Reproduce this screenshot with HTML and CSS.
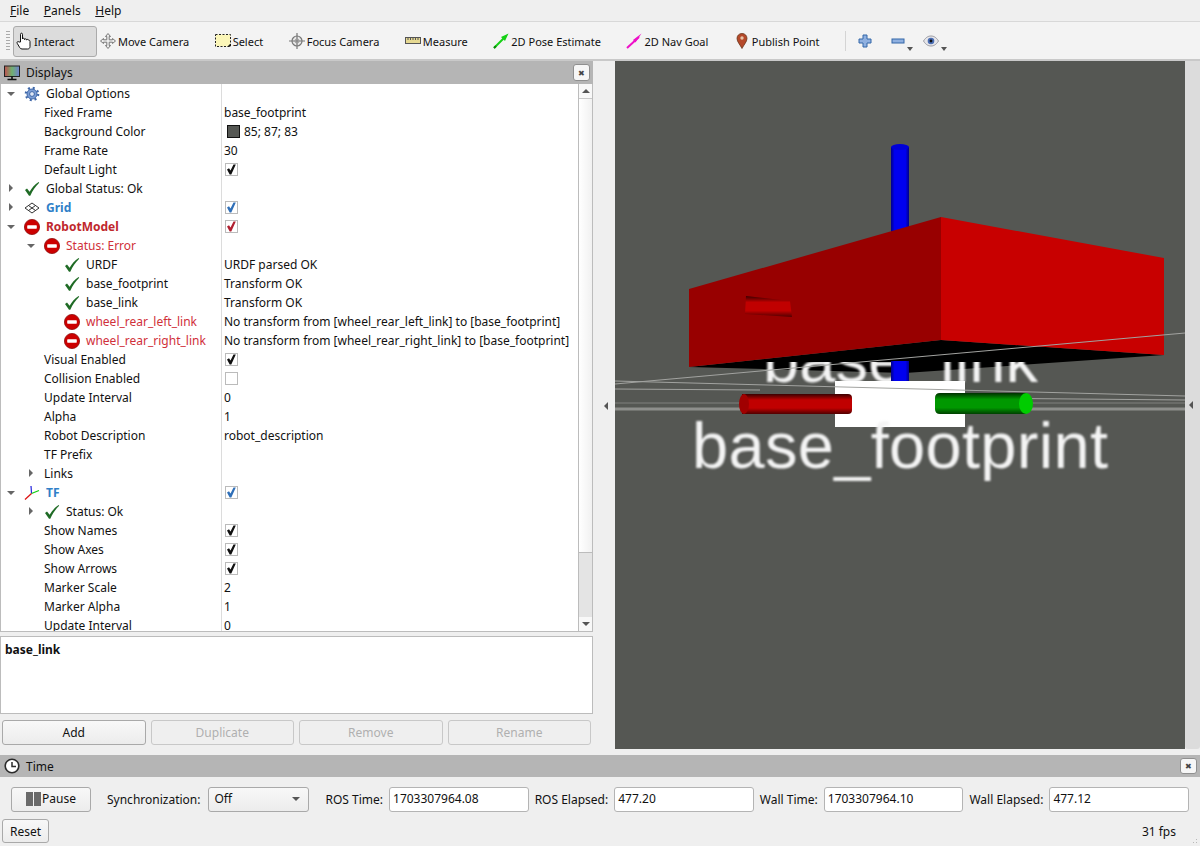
FILE: index.html
```html
<!DOCTYPE html>
<html lang="en">
<head>
<meta charset="utf-8">
<title>RViz</title>
<link rel="stylesheet" href="styles.css">
</head>
<body>
<svg class="defs" aria-hidden="true">
  <defs>
    <linearGradient id="gPole" x1="0" x2="1" y1="0" y2="0"><stop offset="0" stop-color="#00008c"/><stop offset=".2" stop-color="#0000f0"/><stop offset=".8" stop-color="#0000f0"/><stop offset="1" stop-color="#00008c"/></linearGradient>
    <linearGradient id="gRed" x1="0" x2="0" y1="0" y2="1"><stop offset="0" stop-color="#3a0000"/><stop offset=".3" stop-color="#c00000"/><stop offset=".7" stop-color="#c00000"/><stop offset="1" stop-color="#500000"/></linearGradient>
    <linearGradient id="gGreen" x1="0" x2="0" y1="0" y2="1"><stop offset="0" stop-color="#003000"/><stop offset=".3" stop-color="#009800"/><stop offset=".7" stop-color="#009800"/><stop offset="1" stop-color="#004000"/></linearGradient>
    <linearGradient id="gScreen" x1="0" x2="1" y1="0" y2="0"><stop offset="0" stop-color="#c05050"/><stop offset=".5" stop-color="#70b070"/><stop offset="1" stop-color="#7080d0"/></linearGradient>
    <clipPath id="belowBox"><rect x="615" y="362" width="570" height="40"/></clipPath>
    <symbol id="ok" viewBox="0 0 16 16"><path d="M1 9l2-1.500 2.600 3.200C7.800 6.800 10.800 3.600 14.600 1l.6.700C11.300 5.500 8.600 9.500 6.300 14.800H5L1 9z" fill="#1f6b25"/></symbol>
    <symbol id="err" viewBox="0 0 16 16"><circle cx="8" cy="8" r="7.600" fill="#cc0000" stroke="#8f0f0f" stroke-width=".8"/><rect x="3.200" y="6.300" width="9.600" height="3.400" rx=".6" fill="#fff"/></symbol>
    <symbol id="gear" viewBox="0 0 16 16"><circle cx="8" cy="8" r="5" fill="#7d9fd6" stroke="#3d66a8"/><circle cx="8" cy="8" r="6.200" fill="none" stroke="#3d66a8" stroke-width="2.200" stroke-dasharray="2 2.870"/><circle cx="8" cy="8" r="2.400" fill="#dfe8f6" stroke="#3d66a8"/></symbol>
    <symbol id="gridi" viewBox="0 0 16 16"><path d="M8 3l7 5-7 5-7-5zM4.500 5.500l7 5M11.500 5.500l-7 5" fill="none" stroke="#333" stroke-width="1"/></symbol>
    <symbol id="axes" viewBox="0 0 16 16"><path d="M7.500 8.500L7 1" stroke="#2222dd" stroke-width="1.200" fill="none"/><path d="M7.500 8.500L15 5.500" stroke="#11cc11" stroke-width="1.200" fill="none"/><path d="M7.500 8.500L1 14.500" stroke="#dd1111" stroke-width="1.200" fill="none"/></symbol>
    <symbol id="mon" viewBox="0 0 16 16"><rect x=".5" y="1" width="15" height="10.500" fill="url(#gScreen)" stroke="#222"/><path d="M8 11.500v2.500M3.500 14.500h9" stroke="#111" stroke-width="1.600"/></symbol>
    <symbol id="clock" viewBox="0 0 16 16"><circle cx="8" cy="8" r="6.800" fill="#fff" stroke="#2b2b2b" stroke-width="1.600"/><path d="M8 4v4.500h4" fill="none" stroke="#2b2b2b" stroke-width="1.500"/></symbol>
    <symbol id="hand" viewBox="0 0 16 18"><path d="M4.500 10V2.300c0-1.500 2-1.500 2 0V7c0-1 2-1 2 0v.6c0-1 2-1 2 0v.5c0-.9 2-.9 2 0 1 0 1.500.5 1.500 1.500v5c0 1.400-1 2.400-2.400 2.400H6c-1 0-1.700-.5-2.200-1.300L1.200 11.300c-.7-1.300.7-2.400 1.800-1.300z" fill="#fff" stroke="#111" stroke-width="1"/></symbol>
    <symbol id="move" viewBox="0 0 16 16"><path d="M8 .5l2.500 3H9.200v3.300h3.300V5.500l3 2.500-3 2.500V9.200H9.200v3.300h1.300L8 15.500l-2.500-3h1.300V9.200H3.500v1.300L.5 8l3-2.500v1.300h3.300V3.500H5.500z" fill="#eee" stroke="#777"/></symbol>
    <symbol id="sel" viewBox="0 0 16 16"><rect x=".5" y="1.500" width="15" height="12" fill="#fbf6b8" stroke="#222" stroke-dasharray="2 1.500"/><path d="M12.500 13.500l3-3v3z" fill="#111"/></symbol>
    <symbol id="focus" viewBox="0 0 16 16"><circle cx="8" cy="8" r="5" fill="#e8e8e8" stroke="#777" stroke-width="1.200"/><path d="M8 0v16M0 8h16" stroke="#777" stroke-width="1.200"/><circle cx="8" cy="8" r="2" fill="none" stroke="#999"/></symbol>
    <symbol id="ruler" viewBox="0 0 16 16"><rect x=".5" y="4.500" width="15" height="6" fill="#e6d992" stroke="#555"/><path d="M3 5v2M5.500 5v2M8 5v2M10.500 5v2M13 5v2" stroke="#555"/></symbol>
    <symbol id="pose" viewBox="0 0 16 16"><path d="M1 15L12 4" stroke="#15d015" stroke-width="2"/><path d="M15.500 .5L8 4l4 4z" fill="#15d015"/><path d="M1 15l2-2" stroke="#0a8a0a" stroke-width="2"/></symbol>
    <symbol id="nav" viewBox="0 0 16 16"><path d="M1 15L13 4" stroke="#ee10c8" stroke-width="2"/><path d="M15.500 .5L7 7l2.500 2.500z" fill="#ee10c8"/></symbol>
    <symbol id="pin" viewBox="0 0 12 16"><path d="M6 .5C2.800.5 1 2.900 1 5.500c0 3.200 3.300 6.500 5 10 1.700-3.500 5-6.800 5-10C11 2.900 9.200.5 6 .5z" fill="#b5492a" stroke="#6b3a20" stroke-width=".8"/><circle cx="6" cy="5" r="1.700" fill="#e8c4a8"/></symbol>
    <symbol id="plus" viewBox="0 0 14 14"><path d="M5 1h4v4h4v4H9v4H5V9H1V5h4z" fill="#8fb0e0" stroke="#3366a8"/></symbol>
    <symbol id="minus" viewBox="0 0 14 14"><rect x="1" y="5" width="12" height="4" fill="#8fb0e0" stroke="#3366a8"/></symbol>
    <symbol id="eye" viewBox="0 0 16 12"><path d="M.5 6C3 2 5.500 1 8 1s5 1 7.500 5C13 10 10.500 11 8 11S3 10 .5 6z" fill="#e6e6ea" stroke="#9a9aa2"/><circle cx="8" cy="6" r="3.300" fill="#4a6eb5"/><circle cx="8" cy="6" r="1.400" fill="#111"/></symbol>
    <symbol id="tick" viewBox="0 0 11 11"><path d="M1 5.500l2-1.300 1.500 2.300L7.500 .5h2.300L5.300 10.500H3.700z" fill="currentColor"/></symbol>
  </defs>
</svg>

<div class="app">
  <div class="menubar">
    <span class="menu"><u>F</u>ile</span>
    <span class="menu"><u>P</u>anels</span>
    <span class="menu"><u>H</u>elp</span>
  </div>

  <div class="toolbar">
    <span class="grip"></span>
    <div class="tool active"><svg class="i16 tall"><use href="#hand"/></svg>Interact</div>
    <div class="tool"><svg class="i16"><use href="#move"/></svg>Move Camera</div>
    <div class="tool"><svg class="i16"><use href="#sel"/></svg>Select</div>
    <div class="tool"><svg class="i16"><use href="#focus"/></svg>Focus Camera</div>
    <div class="tool"><svg class="i16"><use href="#ruler"/></svg>Measure</div>
    <div class="tool"><svg class="i16"><use href="#pose"/></svg>2D Pose Estimate</div>
    <div class="tool"><svg class="i16"><use href="#nav"/></svg>2D Nav Goal</div>
    <div class="tool"><svg class="i16"><use href="#pin"/></svg>Publish Point</div>
    <span class="tsep"></span>
    <svg class="i14 zoom-plus"><use href="#plus"/></svg>
    <svg class="i14 zoom-minus"><use href="#minus"/></svg><span class="drop"></span>
    <svg class="i16 eye"><use href="#eye"/></svg><span class="drop"></span>
  </div>

  <div class="main">
    <div class="left">
      <div class="title">
        <svg class="i16"><use href="#mon"/></svg><span>Displays</span>
        <span class="close">&#10006;</span>
      </div>
      <div class="treebox">
        <div class="rows">
          <div class="row"><div class="name d0"><i class="tw open"></i><svg class="i16 ic"><use href="#gear"/></svg>Global Options</div><div class="val"></div></div>
          <div class="row"><div class="name plain">Fixed Frame</div><div class="val">base_footprint</div></div>
          <div class="row"><div class="name plain">Background Color</div><div class="val"><span class="swatch"></span>85; 87; 83</div></div>
          <div class="row"><div class="name plain">Frame Rate</div><div class="val">30</div></div>
          <div class="row"><div class="name plain">Default Light</div><div class="val"><span class="cb"><svg><use href="#tick"/></svg></span></div></div>
          <div class="row"><div class="name d0"><i class="tw closed"></i><svg class="i16 ic"><use href="#ok"/></svg>Global Status: Ok</div><div class="val"></div></div>
          <div class="row"><div class="name d0 blue"><i class="tw closed"></i><svg class="i16 ic"><use href="#gridi"/></svg>Grid</div><div class="val"><span class="cb cb-blue"><svg><use href="#tick"/></svg></span></div></div>
          <div class="row"><div class="name d0 redb"><i class="tw open"></i><svg class="i16 ic"><use href="#err"/></svg>RobotModel</div><div class="val"><span class="cb cb-red"><svg><use href="#tick"/></svg></span></div></div>
          <div class="row"><div class="name d1 red"><i class="tw open"></i><svg class="i16 ic"><use href="#err"/></svg>Status: Error</div><div class="val"></div></div>
          <div class="row"><div class="name d2"><i class="tw"></i><svg class="i16 ic"><use href="#ok"/></svg>URDF</div><div class="val">URDF parsed OK</div></div>
          <div class="row"><div class="name d2"><i class="tw"></i><svg class="i16 ic"><use href="#ok"/></svg>base_footprint</div><div class="val">Transform OK</div></div>
          <div class="row"><div class="name d2"><i class="tw"></i><svg class="i16 ic"><use href="#ok"/></svg>base_link</div><div class="val">Transform OK</div></div>
          <div class="row"><div class="name d2 red"><i class="tw"></i><svg class="i16 ic"><use href="#err"/></svg>wheel_rear_left_link</div><div class="val">No transform from [wheel_rear_left_link] to [base_footprint]</div></div>
          <div class="row"><div class="name d2 red"><i class="tw"></i><svg class="i16 ic"><use href="#err"/></svg>wheel_rear_right_link</div><div class="val">No transform from [wheel_rear_right_link] to [base_footprint]</div></div>
          <div class="row"><div class="name plain">Visual Enabled</div><div class="val"><span class="cb"><svg><use href="#tick"/></svg></span></div></div>
          <div class="row"><div class="name plain">Collision Enabled</div><div class="val"><span class="cb"></span></div></div>
          <div class="row"><div class="name plain">Update Interval</div><div class="val">0</div></div>
          <div class="row"><div class="name plain">Alpha</div><div class="val">1</div></div>
          <div class="row"><div class="name plain">Robot Description</div><div class="val">robot_description</div></div>
          <div class="row"><div class="name plain">TF Prefix</div><div class="val"></div></div>
          <div class="row"><div class="name d1 sub"><i class="tw closed"></i>Links</div><div class="val"></div></div>
          <div class="row"><div class="name d0 blue"><i class="tw open"></i><svg class="i16 ic"><use href="#axes"/></svg>TF</div><div class="val"><span class="cb cb-blue"><svg><use href="#tick"/></svg></span></div></div>
          <div class="row"><div class="name d1"><i class="tw closed"></i><svg class="i16 ic"><use href="#ok"/></svg>Status: Ok</div><div class="val"></div></div>
          <div class="row"><div class="name plain">Show Names</div><div class="val"><span class="cb"><svg><use href="#tick"/></svg></span></div></div>
          <div class="row"><div class="name plain">Show Axes</div><div class="val"><span class="cb"><svg><use href="#tick"/></svg></span></div></div>
          <div class="row"><div class="name plain">Show Arrows</div><div class="val"><span class="cb"><svg><use href="#tick"/></svg></span></div></div>
          <div class="row"><div class="name plain">Marker Scale</div><div class="val">2</div></div>
          <div class="row"><div class="name plain">Marker Alpha</div><div class="val">1</div></div>
          <div class="row"><div class="name plain">Update Interval</div><div class="val">0</div></div>
        </div>
        <div class="scroll">
          <div class="sbtn"><i class="up"></i></div>
          <div class="thumb"></div>
          <div class="track"></div>
          <div class="sbtn"><i class="down"></i></div>
        </div>
      </div>
      <div class="hsplit"><span class="dots"></span></div>
      <div class="desc"><b>base_link</b></div>
      <div class="actions">
        <div class="btn">Add</div>
        <div class="btn off">Duplicate</div>
        <div class="btn off">Remove</div>
        <div class="btn off">Rename</div>
      </div>
    </div>

    <div class="lstrip"><i class="larrow"></i></div>

    <svg class="scene" viewBox="615 61 570 688">
      <rect x="615" y="61" width="570" height="688" fill="#555753"/>
      <rect x="891" y="147" width="18" height="100" fill="url(#gPole)"/>
      <ellipse cx="900" cy="147" rx="9" ry="3" fill="#0000d8"/>
      <path d="M689 367L941 340L1164 355L905 373Z" fill="#000"/>
      <path d="M689 289L941 217V340L689 367Z" fill="#980000"/>
      <path d="M941 217L1164 258V355L941 340Z" fill="#c80000"/>
      <path d="M746 296L790 301L792 317L745 314Z" fill="url(#gRed)"/>
      <text class="t3d" x="763" y="382" textLength="275" clip-path="url(#belowBox)">base_link</text>
      <rect x="891" y="361" width="18" height="20" fill="url(#gPole)"/>
      <rect x="835" y="381" width="130" height="46" fill="#fff"/>
      <g fill="none" stroke="#a2a3a0">
        <path d="M615 384L1185 333"/>
        <path d="M615 381L1185 396"/>
        <path d="M615 389L760 390"/>
        <path d="M965 398L1185 400"/>
        <path d="M615 403H740M1030 403H1185" stroke="#80817e"/>
        <path d="M615 409H740M1030 409H1185" stroke="#8e8f8c" stroke-width="3"/>
      </g>
      <path d="M742 394H848Q852 394 852 398V410Q852 414 848 414H742Z" fill="url(#gRed)"/>
      <ellipse cx="744" cy="404" rx="5" ry="10" fill="#a00000"/>
      <path d="M1026 393H940Q935 393 935 398V409Q935 414 940 414H1026Z" fill="url(#gGreen)"/>
      <ellipse cx="1026" cy="403.500" rx="7" ry="10.500" fill="#00cc00"/>
      <text class="t3d" x="692" y="468" textLength="416">base_footprint</text>
    </svg>

    <div class="rstrip"><i class="larrow"></i></div>
  </div>

  <div class="vsplit"><span class="dots"></span></div>

  <div class="title time-title">
    <svg class="i16"><use href="#clock"/></svg><span>Time</span>
    <span class="close">&#10006;</span>
  </div>
  <div class="controls">
    <div class="btn pause"><span class="bars"><i></i><i></i></span>Pause</div>
    <span class="lbl sync">Synchronization:</span>
    <div class="select">Off<i class="down"></i></div>
    <span class="lbl wide">ROS Time:</span>
    <div class="field">1703307964.08</div>
    <span class="lbl">ROS Elapsed:</span>
    <div class="field">477.20</div>
    <span class="lbl">Wall Time:</span>
    <div class="field">1703307964.10</div>
    <span class="lbl">Wall Elapsed:</span>
    <div class="field">477.12</div>
  </div>
  <div class="status">
    <div class="btn reset">Reset</div>
    <span class="fps">31 fps</span>
    <span class="sizegrip"></span>
  </div>
</div>
</body>
</html>
```

FILE: styles.css
```css
* { box-sizing: border-box; }
html, body { margin: 0; padding: 0; }
body { background: #efefef; color: #111; font: 12px/19px "Noto Sans", sans-serif; overflow: hidden; }
.defs { position: absolute; width: 0; height: 0; }
.app { width: 1200px; height: 846px; display: flex; flex-direction: column; overflow: hidden; }
i { display: block; font-style: normal; }
.i16 { width: 16px; height: 16px; flex: none; display: block; }
.i14 { width: 14px; height: 14px; flex: none; display: block; }

.menubar { height: 22px; display: flex; align-items: center; gap: 14.5px; padding: 0 0 1px 10px; border-bottom: 1px solid #d8d8d8; }
.menu u { text-decoration-thickness: 1px; }

.toolbar { height: 39px; display: flex; align-items: center; padding: 1px 0 0 6px; background: #f3f3f3; border-bottom: 2px solid #c9c9c9; }
.grip { width: 4px; height: 22px; margin-right: 3px; background-image: radial-gradient(#aaa 0.6px, transparent 0.7px); background-size: 2px 3px; }
.tool { height: 31px; display: flex; align-items: center; gap: 2px; padding: 1px 21.5px 0 2px; border: 1px solid transparent; border-radius: 3px; white-space: nowrap; font-size: 11px; }
.tool svg { margin-top: -1px; }
.tool.active { background: #dcdcdc; border-color: #ababab; }
.tall { height: 18px; }
.tsep { width: 1px; height: 20px; background: #d4d4d4; margin: 0 12px 0 3px; }
.zoom-minus { margin-left: 19px; }
.eye { margin-left: 10px; }
.drop { width: 0; height: 0; margin: 15px 0 0 2px; border: 3px solid transparent; border-top: 4px solid #555; border-bottom: 0; }

.main { height: 689px; display: flex; }
.left { width: 593px; flex: none; display: flex; flex-direction: column; }
.title { height: 23px; flex: none; display: flex; align-items: center; gap: 6px; padding: 0 3px 0 4px; background: #b5b5b5; }
.title span:first-of-type { flex: 1; }
.close { flex: none; width: 17px; height: 17px; display: flex; align-items: center; justify-content: center; background: #f6f6f6; border: 1px solid #8f8f8f; border-radius: 3px; font-size: 8px; line-height: 1; color: #444; }
.treebox { height: 548px; flex: none; display: flex; background: #fff; border: 1px solid #bcbcbc; border-top: 0; }
.rows { flex: 1; min-width: 0; overflow: hidden; }
.row { height: 19px; display: flex; }
.name { width: 221px; flex: none; display: flex; align-items: center; white-space: nowrap; border-right: 1px solid #dcdcdc; }
.val { flex: 1; min-width: 0; padding-left: 2px; display: flex; align-items: center; white-space: nowrap; }
.plain { padding-left: 43px; }
.d1 { padding-left: 20px; }
.d2 { padding-left: 40px; }
.d0 .ic, .d1 .ic, .d2 .ic { margin: 0 6px 0 3px; }
.d1.sub { padding-left: 20px; }
.d1.sub .tw { margin-right: 3px; }
.tw { width: 20px; height: 19px; flex: none; position: relative; }
.tw.open::after, .tw.closed::after { content: ""; position: absolute; left: 7px; top: 7px; width: 0; height: 0; border: 4px solid transparent; }
.tw.open::after { top: 8px; left: 6px; border-top: 4px solid #666; border-bottom: 0; }
.tw.closed::after { left: 8px; top: 5px; border-left: 4px solid #666; border-right: 0; }
.blue { color: #2f80c8; font-weight: 700; }
.redb { color: #c0272d; font-weight: 700; }
.red { color: #d0303a; }
.swatch { width: 13px; height: 13px; margin: 0 4px 0 3px; background: #555753; border: 1px solid #111; }
.cb { width: 13px; height: 13px; margin-left: 1px; display: block; background: #fff; border: 1px solid #bbb; color: #111; }
.cb svg { width: 11px; height: 11px; display: block; }
.cb-blue { color: #2f6fb8; }
.cb-red { color: #b02030; }

.scroll { width: 14px; flex: none; display: flex; flex-direction: column; border-left: 1px solid #bcbcbc; background: #e4e4e4; }
.sbtn { height: 14px; flex: none; display: flex; align-items: center; justify-content: center; background: #f8f8f8; }
.up { width: 0; height: 0; border: 4px solid transparent; border-bottom: 4px solid #555; border-top: 0; }
.down { width: 0; height: 0; border: 4px solid transparent; border-top: 4px solid #555; border-bottom: 0; }
.thumb { height: 455px; flex: none; background: linear-gradient(90deg, #fff, #f1f1f1); border-top: 1px solid #c8c8c8; border-bottom: 1px solid #bcbcbc; }
.track { flex: 1; }

.hsplit { height: 4px; flex: none; position: relative; }
.dots { display: block; width: 11px; height: 2px; background-image: radial-gradient(#b0b0b0 0.6px, transparent 0.7px); background-size: 3px 2px; }
.hsplit .dots { margin-left: 294px; }
.desc { height: 78px; flex: none; padding: 3px 4px; background: #fff; border: 1px solid #bcbcbc; }
.desc b { font-weight: 700; }
.actions { display: grid; grid-template-columns: repeat(4, 1fr); gap: 5px; margin-top: 6px; padding: 0 2px; }
.btn { height: 25px; display: flex; align-items: center; justify-content: center; background: linear-gradient(#f8f8f8, #ececec); border: 1px solid #a9a9a9; border-radius: 3px; }
.btn.off { color: #b0b0b0; border-color: #c8c8c8; background: #efefef; }

.lstrip { width: 22px; flex: none; display: flex; align-items: center; padding-left: 11px; }
.larrow { width: 0; height: 0; border: 4px solid transparent; border-right: 4px solid #555; border-left: 0; }
.scene { width: 570px; height: 688px; flex: none; display: block; }
.rstrip { width: 15px; height: 688px; flex: none; display: flex; align-items: center; padding-left: 4px; background: #dcdcdc; border-radius: 0 0 3px 3px; }
.t3d { font: 65px "Liberation Sans", sans-serif; fill: #f4f4f4; filter: blur(1px); }

.vsplit { height: 5px; flex: none; padding: 2px 0 0 596px; }
.time-title { height: 22px; }
.time-title .close { height: 16px; }
.controls { height: 42px; flex: none; display: flex; align-items: center; padding: 3px 11px 0 11px; }
.pause { width: 80px; gap: 1px; flex: none; padding-bottom: 3px; }
.bars { display: flex; gap: 1px; margin-top: 2px; }
.bars i { width: 7px; height: 14px; background: #6a6a6a; }
.lbl { flex: none; white-space: nowrap; margin: 0 6px; }
.sync { margin: 0 8px 0 16px; }
.wide { margin-left: 16px; }
.select { width: 101px; height: 25px; flex: none; display: flex; align-items: center; justify-content: space-between; padding: 0 8px 2px 5px; background: linear-gradient(#f8f8f8, #ececec); border: 1px solid #a9a9a9; border-radius: 3px; }
.field { flex: 1; min-width: 0; height: 25px; display: flex; align-items: center; padding: 0 3px 2px; background: #fff; border: 1px solid #b4b4b4; border-radius: 3px; }
.status { flex: 1; display: flex; align-items: center; padding: 0 0 3px 2px; }
.reset { width: 47px; height: 24px; }
.fps { margin-left: auto; margin-right: 24px; }
.sizegrip { position: absolute; right: 1px; bottom: 1px; width: 10px; height: 10px; background-image: radial-gradient(#b8b8b8 0.7px, transparent 0.8px); background-size: 3px 3px; clip-path: polygon(100% 0, 100% 100%, 0 100%); }
```
